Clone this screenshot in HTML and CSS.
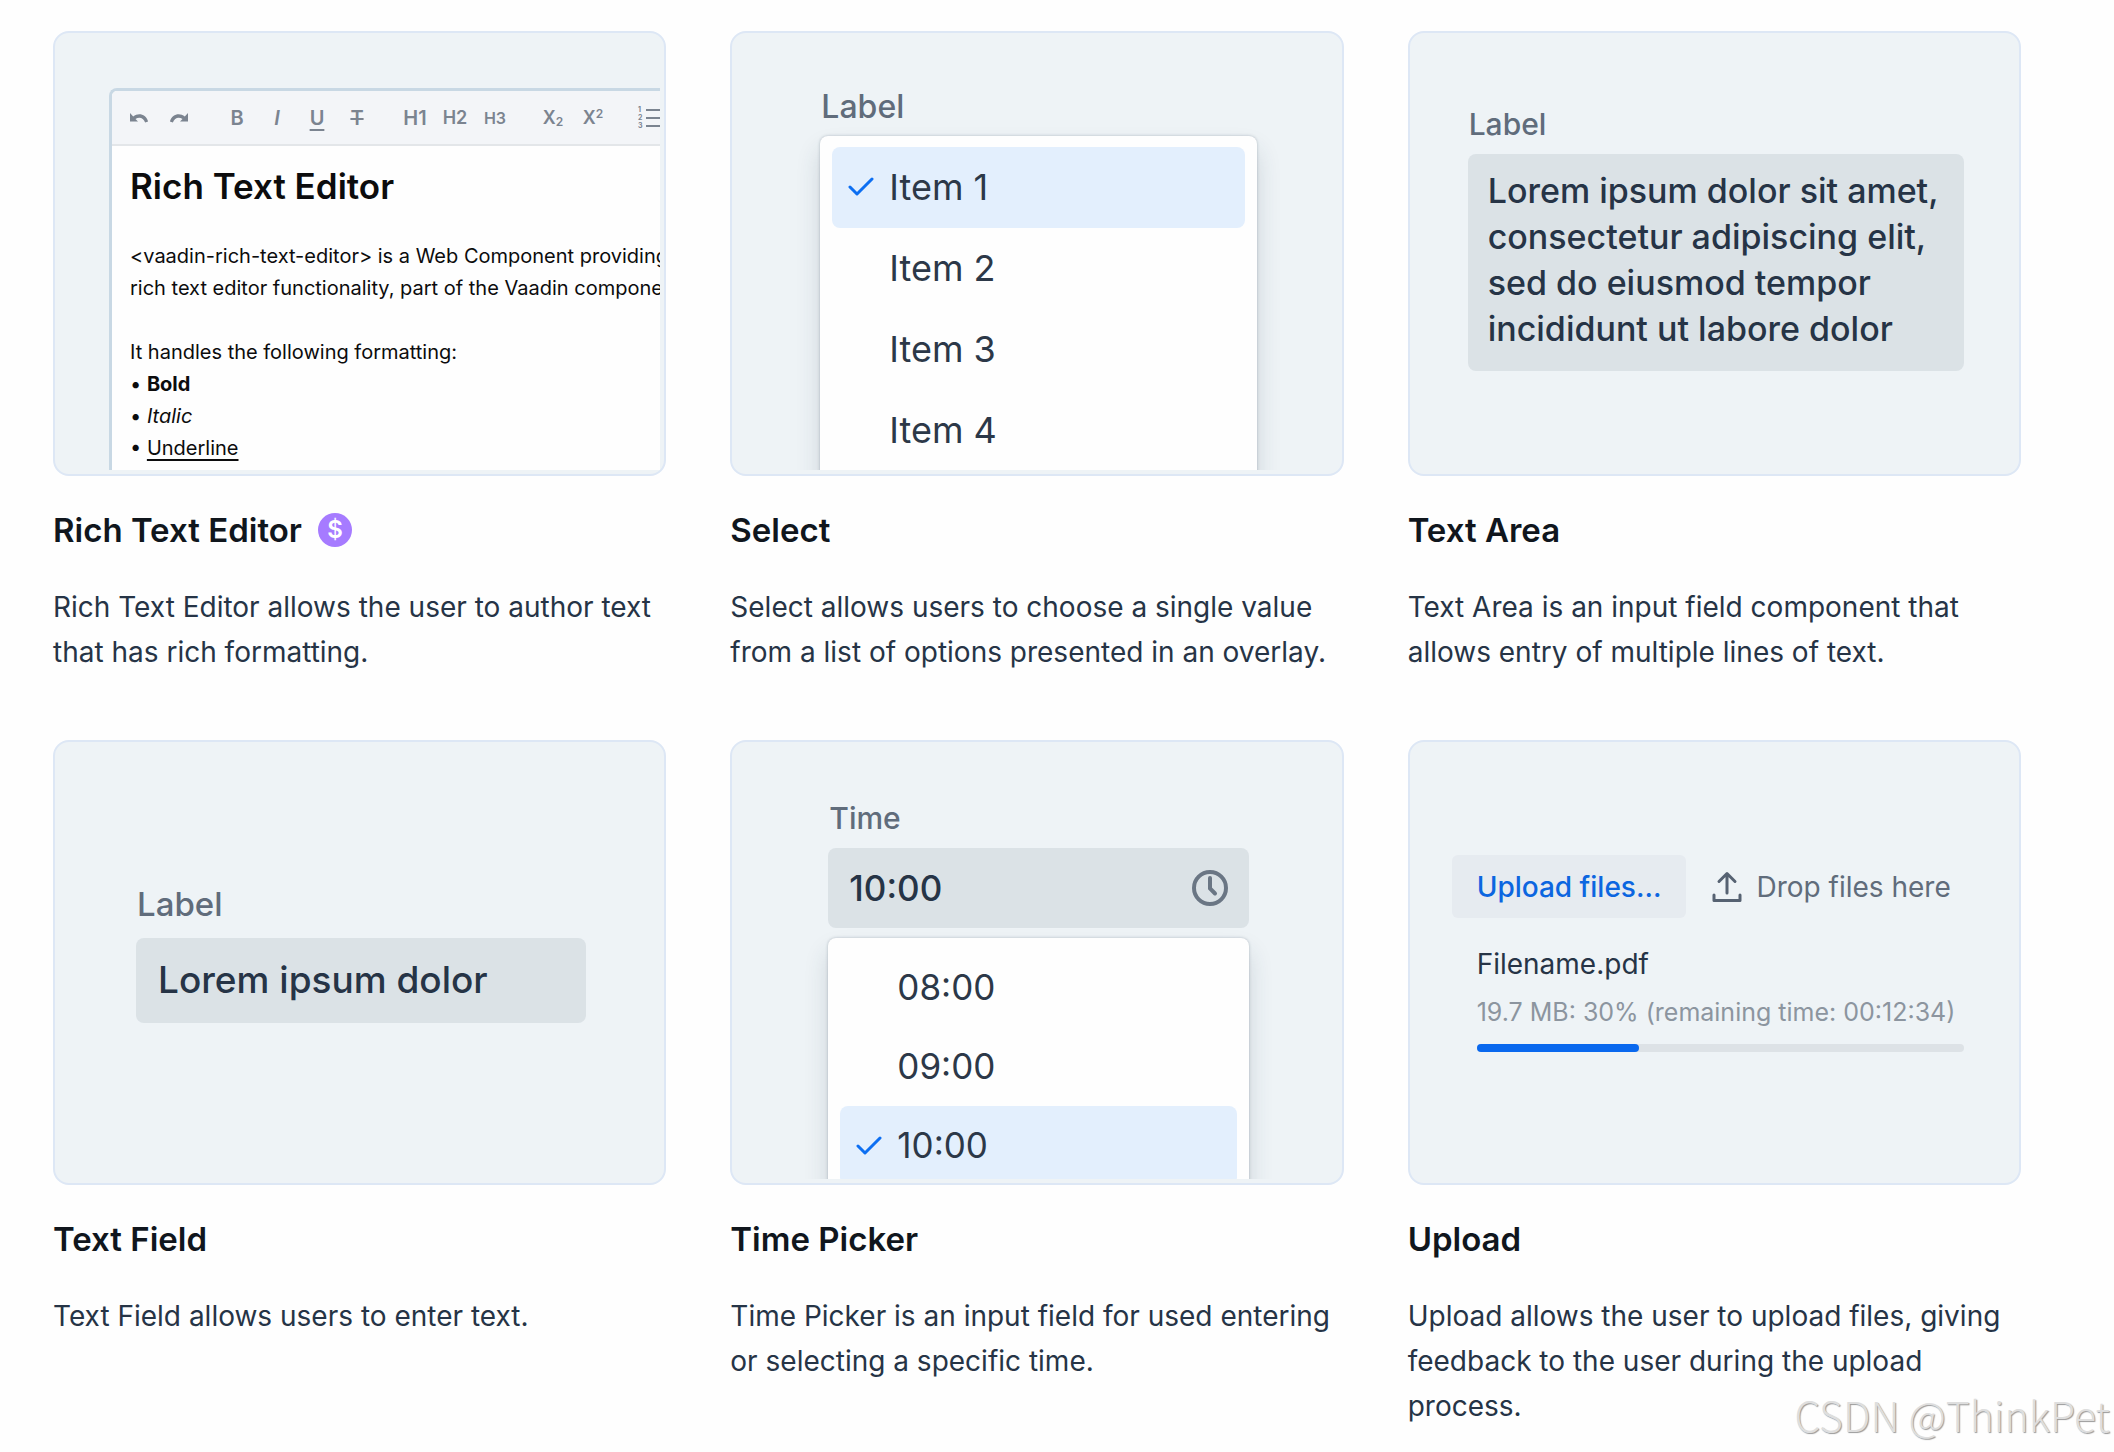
FILE: index.html
```html
<!DOCTYPE html>
<html lang="en">
<head>
<meta charset="utf-8">
<meta name="viewport" content="width=device-width, initial-scale=1">
<title>Components</title>
<link rel="stylesheet" href="styles.css">
</head>
<body>
<main class="components">

  <article class="component">
    <div class="preview">
      <div class="preview-inner preview-editor">
        <div class="editor">
          <div class="toolbar" role="toolbar" aria-label="Formatting">
            <div class="tool-group">
              <button class="tool" type="button" aria-label="Undo"><svg width="20" height="20" viewBox="0 0 20 20"><path d="M1 5v8.500h8L6.500 11c3.500-2.600 8-1.500 9.600 3.400l3-.8C17 6.200 9.700 4.500 4.200 8.400z" fill="currentColor"/></svg></button>
              <button class="tool" type="button" aria-label="Redo"><svg width="20" height="20" viewBox="0 0 20 20"><path d="M19 5v8.500h-8l2.500-2.500c-3.500-2.600-8-1.500-9.600 3.400l-3-.8C3 6.200 10.300 4.500 15.800 8.400z" fill="currentColor"/></svg></button>
            </div>
            <div class="tool-group">
              <button class="tool tool-bold" type="button">B</button>
              <button class="tool tool-italic" type="button">I</button>
              <button class="tool tool-underline" type="button">U</button>
              <button class="tool tool-strike" type="button">T</button>
            </div>
            <div class="tool-group">
              <button class="tool" type="button">H1</button>
              <button class="tool tool-h2" type="button">H2</button>
              <button class="tool tool-h3" type="button">H3</button>
            </div>
            <div class="tool-group">
              <button class="tool tool-script" type="button">X<sub>2</sub></button>
              <button class="tool tool-script" type="button">X<sup>2</sup></button>
            </div>
            <div class="tool-group">
              <button class="tool tool-list" type="button" aria-label="Numbered list"><svg width="28" height="24" viewBox="0 0 28 24"><g stroke="currentColor" stroke-width="2" fill="none"><path d="M9 4h19M9 12h19M9 20h19"/></g><g fill="currentColor" font-family="Inter, sans-serif" font-size="7" font-weight="700"><text x="1" y="6">1</text><text x="1" y="14">2</text><text x="1" y="22">3</text></g></svg></button>
            </div>
          </div>
          <div class="document">
            <h3 class="document-title">Rich Text Editor</h3>
            <p class="document-text">&lt;vaadin-rich-text-editor&gt; is a Web Component providing<br>rich text editor functionality, part of the Vaadin component</p>
            <p class="document-text">It handles the following formatting:<br>• <b>Bold</b><br>• <i>Italic</i><br>• <u>Underline</u></p>
          </div>
        </div>
      </div>
    </div>
    <h2 class="title">Rich Text Editor <span class="badge">$</span></h2>
    <p class="description">Rich Text Editor allows the user to author text that has rich formatting.</p>
  </article>

  <article class="component">
    <div class="preview">
      <div class="preview-inner preview-select">
        <span class="label" id="select-label">Label</span>
        <ul class="overlay" role="listbox" aria-labelledby="select-label">
          <li class="option option-selected" role="option" aria-selected="true"><svg class="check" width="26" height="20" viewBox="0 0 26 20"><path d="M2 10l7 7L24 2" /></svg>Item 1</li>
          <li class="option" role="option">Item 2</li>
          <li class="option" role="option">Item 3</li>
          <li class="option" role="option">Item 4</li>
        </ul>
      </div>
    </div>
    <h2 class="title">Select</h2>
    <p class="description">Select allows users to choose a single value from a list of options presented in an overlay.</p>
  </article>

  <article class="component">
    <div class="preview">
      <div class="preview-inner preview-area">
        <label class="label label-small" for="area">Label</label>
        <textarea class="field field-area" id="area" rows="4">Lorem ipsum dolor sit amet, consectetur adipiscing elit, sed do eiusmod tempor incididunt ut labore dolor</textarea>
      </div>
    </div>
    <h2 class="title">Text Area</h2>
    <p class="description">Text Area is an input field component that allows entry of multiple lines of text.</p>
  </article>

  <article class="component">
    <div class="preview">
      <div class="preview-inner preview-field">
        <label class="label label-large" for="text">Label</label>
        <input class="field field-text" id="text" type="text" value="Lorem ipsum dolor">
      </div>
    </div>
    <h2 class="title">Text Field</h2>
    <p class="description">Text Field allows users to enter text.</p>
  </article>

  <article class="component">
    <div class="preview">
      <div class="preview-inner preview-time">
        <label class="label label-small" for="time">Time</label>
        <div class="field field-time">
          <input class="time-input" id="time" type="text" value="10:00">
          <svg class="clock" width="36" height="36" viewBox="0 0 36 36"><circle cx="18" cy="18" r="16"/><path d="M18 8v10.500l5 5"/></svg>
        </div>
        <ul class="overlay overlay-time" role="listbox" aria-label="Time">
          <li class="option" role="option">08:00</li>
          <li class="option" role="option">09:00</li>
          <li class="option option-selected" role="option" aria-selected="true"><svg class="check" width="26" height="20" viewBox="0 0 26 20"><path d="M2 10l7 7L24 2" /></svg>10:00</li>
        </ul>
      </div>
    </div>
    <h2 class="title">Time Picker</h2>
    <p class="description">Time Picker is an input field for used entering or selecting a specific time.</p>
  </article>

  <article class="component">
    <div class="preview">
      <div class="preview-inner preview-upload">
        <div class="upload-bar">
          <button class="upload-button" type="button">Upload files...</button>
          <span class="drop"><svg class="drop-icon" width="30" height="32" viewBox="0 0 30 32"><path d="M15 22V3M7 10.500L15 2.500l8 8M2 24v5.500h26V24"/></svg>Drop files here</span>
        </div>
        <div class="file">
          <label class="file-name" for="progress">Filename.pdf</label>
          <span class="file-status">19.7 MB: 30% (remaining time: 00:12:34)</span>
          <progress class="file-progress" id="progress" value="1" max="3"></progress>
        </div>
      </div>
    </div>
    <h2 class="title">Upload</h2>
    <p class="description">Upload allows the user to upload files, giving feedback to the user during the upload process.</p>
  </article>

</main>
<div class="watermark">CSDN @ThinkPet</div>
</body>
</html>
```
FILE: styles.css
```css
* {
  box-sizing: border-box;
}

body {
  margin: 0;
  position: relative;
  min-height: 100vh;
  background: #fefefe;
  color: #263446;
  font-family: Inter, "Liberation Sans", sans-serif;
}

h2, h3, p, ul {
  margin: 0;
  padding: 0;
}

button, input, textarea {
  font-family: inherit;
  border: 0;
  outline: 0;
}

.components {
  display: grid;
  grid-template-columns: repeat(3, minmax(0, 1fr));
  gap: 65px 64px;
  padding: 31px 93px 10px 53px;
}

.preview {
  display: flex;
  aspect-ratio: 613 / 445;
  padding: 4px;
  border: 2px solid #dde7f5;
  border-radius: 16px;
  background: #eef3f6;
}

.preview-inner {
  display: flex;
  flex: 1;
  flex-direction: column;
  min-width: 0;
  overflow: hidden;
}

.title {
  display: flex;
  align-items: center;
  gap: 16px;
  margin-top: 34px;
  color: #10161d;
  font-size: 33px;
  font-weight: 600;
  line-height: 40px;
}

.badge {
  width: 34px;
  height: 34px;
  border-radius: 50%;
  background: #a67bff;
  color: #fff;
  font-size: 24px;
  line-height: 34px;
  text-align: center;
}

.description {
  margin-top: 35px;
  font-size: 28px;
  line-height: 45px;
}

/* Shared field parts */

.label {
  padding-left: 1px;
  color: #606c7b;
  font-size: 32px;
  font-weight: 500;
  line-height: 40px;
}

.label-small {
  font-size: 30px;
}

.label-large {
  font-size: 33px;
}

.field {
  border-radius: 8px;
  background: #dbe2e6;
  color: #263446;
  font-weight: 500;
}

.overlay {
  flex: 1 0 auto;
  padding: 11px 12px;
  border-radius: 8px 8px 0 0;
  background: #fefefe;
  box-shadow: 0 0 3px rgba(40, 60, 80, 0.3), 0 14px 24px rgba(40, 60, 80, 0.16);
  list-style: none;
}

.option {
  position: relative;
  padding-left: 57px;
  border-radius: 8px;
  color: #2c3848;
  font-size: 36px;
  line-height: 81px;
}

.option-selected {
  background: #e3effd;
}

.check {
  position: absolute;
  top: 30px;
  left: 16px;
  fill: none;
  stroke: #0d6ff2;
  stroke-width: 3;
  stroke-linecap: round;
  stroke-linejoin: round;
}

/* Rich text editor */

.preview-editor {
  padding: 51px 0 0 50px;
}

.editor {
  flex: 1;
  border: 3px solid #c8d8e4;
  border-width: 3px 0 0 3px;
  border-radius: 8px 0 0 0;
  background: #fefefe;
  overflow: hidden;
}

.toolbar {
  display: flex;
  gap: 18px;
  height: 55px;
  padding-left: 7px;
  border-bottom: 2px solid #e3e6e9;
  background: #f3f5f8;
}

.tool-group {
  display: flex;
  flex: none;
}

.tool {
  display: flex;
  align-items: center;
  justify-content: center;
  width: 40px;
  padding: 0;
  background: none;
  color: #7b8490;
  font-size: 20px;
  font-weight: 600;
}

.tool-italic {
  font-style: italic;
}

.tool-underline {
  text-decoration: underline;
  text-underline-offset: 4px;
}

.tool-strike {
  text-decoration: line-through;
}

.tool-h2 {
  font-size: 18px;
}

.tool-h3 {
  font-size: 16px;
}

.tool-script {
  font-size: 18px;
}

.tool-script sub,
.tool-script sup {
  font-size: 12px;
}

.tool-script sub {
  margin-top: 8px;
}

.tool-script sup {
  margin-bottom: 8px;
}

.document {
  padding: 18px 0 0 18px;
  color: #0c0c0d;
  white-space: nowrap;
}

.document-title {
  font-size: 35px;
  font-weight: 600;
  line-height: 44px;
}

.document-text {
  margin-top: 32px;
  font-size: 20px;
  line-height: 32px;
}

.document-text u {
  text-underline-offset: 4px;
}

/* Field previews */

.preview-select {
  gap: 9px;
  padding: 50px 81px 0 84px;
}

.preview-area {
  gap: 10px;
  padding: 67px 51px 0 54px;
}

.field-area {
  width: 100%;
  height: 217px;
  padding: 14px 20px;
  font-size: 34px;
  line-height: 46px;
  resize: none;
  overflow: hidden;
}

.preview-field {
  gap: 14px;
  padding: 138px 74px 0 77px;
}

.field-text {
  width: 100%;
  height: 85px;
  padding: 0 22px 2px;
  font-size: 37px;
}

.preview-time {
  gap: 10px;
  padding: 52px 89px 0 92px;
}

.field-time {
  display: flex;
  flex: none;
  align-items: center;
  justify-content: space-between;
  height: 80px;
  padding: 0 21px;
}

.time-input {
  width: 200px;
  padding: 0;
  background: none;
  color: inherit;
  font-size: 35px;
  font-weight: 500;
}

.clock {
  fill: none;
  stroke: #6a7684;
  stroke-width: 4;
  stroke-linecap: round;
}

.overlay-time {
  padding-top: 10px;
}

.overlay-time .option {
  font-size: 35px;
  line-height: 79px;
}

/* Upload */

.preview-upload {
  padding: 109px 51px 0 38px;
}

.upload-bar {
  display: flex;
  align-items: center;
  gap: 26px;
  white-space: nowrap;
}

.upload-button {
  height: 63px;
  padding: 0 25px;
  border-radius: 6px;
  background: #e6ebf0;
  color: #0c66e0;
  font-size: 28px;
  font-weight: 500;
}

.drop {
  display: flex;
  align-items: center;
  gap: 14px;
  color: #606c7b;
  font-size: 28px;
}

.drop-icon {
  flex: none;
  fill: none;
  stroke: #566272;
  stroke-width: 3;
  stroke-linecap: round;
  stroke-linejoin: round;
}

.file {
  display: flex;
  flex-direction: column;
  margin-top: 26px;
  padding-left: 25px;
  white-space: nowrap;
}

.file-name {
  font-size: 28px;
  line-height: 40px;
}

.file-status {
  margin-top: 8px;
  color: #8c959f;
  font-size: 25px;
  line-height: 40px;
}

.file-progress {
  width: 100%;
  height: 8px;
  margin-top: 12px;
  appearance: none;
  border: 0;
}

.file-progress::-webkit-progress-bar {
  border-radius: 4px;
  background: #dde2e6;
}

.file-progress::-webkit-progress-value {
  border-radius: 4px;
  background: #0968ee;
}

.watermark {
  position: absolute;
  right: 4px;
  bottom: 16px;
  color: #dedede;
  font-family: "Noto Sans CJK SC", sans-serif;
  font-size: 41px;
  font-weight: 300;
  line-height: 44px;
  text-shadow: 1px 1px 1px #999;
}
```
